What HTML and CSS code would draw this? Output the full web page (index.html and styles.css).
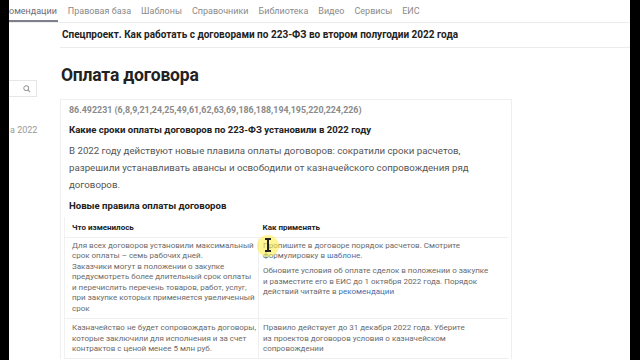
FILE: index.html
```html
<!DOCTYPE html>
<html lang="ru">
<head>
    <meta charset="UTF-8">
    <meta name="viewport" content="width=device-width, initial-scale=1.0">
    <title>Оплата договора</title>
    <link rel="stylesheet" href="styles.css">
</head>
<body>
    <div class="screen">
        <div class="nav">
            <a class="nav-item active">омендации</a>
            <a class="nav-item">Правовая база</a>
            <a class="nav-item">Шаблоны</a>
            <a class="nav-item">Справочники</a>
            <a class="nav-item">Библиотека</a>
            <a class="nav-item">Видео</a>
            <a class="nav-item">Сервисы</a>
            <a class="nav-item">ЕИС</a>
        </div>

        <div class="page">
            <!-- Левая колонка -->
            <div class="sidebar">
                <div class="search">
                    <svg width="8" height="8" viewBox="0 0 10 10">
                        <circle cx="4" cy="4" r="3" fill="none" stroke="#999" stroke-width="1.3"/>
                        <line x1="6.2" y1="6.2" x2="9" y2="9" stroke="#999" stroke-width="1.4"/>
                    </svg>
                </div>
                <div class="side-link">а 2022</div>
            </div>

            <div class="main">
                <div class="project">Спецпроект. Как работать с договорами по 223-ФЗ во втором полугодии 2022 года</div>
                <h1>Оплата договора</h1>

                <div class="card">
                    <div class="code">86.492231 (6,8,9,21,24,25,49,61,62,63,69,186,188,194,195,220,224,226)</div>
                    <h3>Какие сроки оплаты договоров по 223-ФЗ установили в 2022 году</h3>
                    <p class="lead">В 2022 году действуют новые плавила оплаты договоров: сократили сроки расчетов,<br>разрешили устанавливать авансы и освободили от казначейского сопровождения ряд<br>договоров.</p>
                    <h3 class="sub">Новые правила оплаты договоров</h3>

                    <table class="rules">
                        <colgroup>
                            <col class="col-what">
                            <col>
                        </colgroup>
                        <tr>
                            <th>Что изменилось</th>
                            <th>Как применять</th>
                        </tr>
                        <tr>
                            <td>
                                Для всех договоров установили максимальный<br>срок оплаты – семь рабочих дней.<br>
                                Заказчики могут в положении о закупке<br>предусмотреть более длительный срок оплаты<br>и перечислить перечень товаров, работ, услуг,<br>при закупке которых применяется увеличенный<br>срок
                            </td>
                            <td>
                                <p class="cell-p cursor-wrap">Пропишите в договоре порядок расчетов. Смотрите<br>формулировку в <a href="#">шаблоне</a>.<span class="cursor"><span class="beam"></span></span></p>
                                <p class="cell-p">Обновите условия об оплате сделок в положении о закупке<br>и разместите его в ЕИС до 1 октября 2022 года. Порядок<br>действий читайте в <a href="#">рекомендации</a></p>
                            </td>
                        </tr>
                        <tr>
                            <td>Казначейство не будет сопровождать договоры,<br>которые заключили для исполнения и за счет<br>контрактов с ценой менее 5 млн руб.</td>
                            <td>Правило действует до 31 декабря 2022 года. Уберите<br>из проектов договоров условия о казначейском<br>сопровождении</td>
                        </tr>
                    </table>
                </div>
                <div class="scrollbar"></div>
            </div>
        </div>
    </div>
</body>
</html>
```

FILE: styles.css
```css
body {
    margin: 0;
    padding: 0;
    background: #000;
    font-family: Roboto, Arial, sans-serif;
    color: #222;
}

.screen {
    width: 621px;
    height: 360px;
    margin-left: 9px;
    background: #fff;
    overflow: hidden;
}

/* Навигация */
.nav {
    display: flex;
    gap: 10px;
    height: 23px;
    border-bottom: 1px solid #ececec;
    box-sizing: border-box;
}

.nav-item {
    font-size: 9px;
    color: #8a8a8a;
    line-height: 23px;
    white-space: nowrap;
}

.nav-item.active {
    color: #6b6b78;
    box-shadow: inset 0 -2px 0 #7d7f8c;
    padding-right: 1px;
}

.page {
    display: flex;
}

.sidebar {
    width: 51px;
    flex-shrink: 0;
}

.search {
    margin-top: 57px;
    width: 28px;
    height: 17px;
    border: 1px solid #e6e6e6;
    border-left: none;
    box-sizing: border-box;
    display: flex;
    align-items: center;
    justify-content: flex-end;
    padding-right: 5px;
}

.side-link {
    margin-top: 28px;
    font-size: 9px;
    color: #999;
    padding-left: 1px;
}

.main {
    flex: 1;
}

.project {
    height: 25px;
    line-height: 24px;
    padding-left: 2px;
    font-size: 10px;
    font-weight: 700;
    color: #222;
    border-bottom: 1px solid #ececec;
    box-sizing: border-box;
    white-space: nowrap;
}

h1 {
    font-size: 17.5px;
    font-weight: 700;
    margin: 13px 0 0 1px;
    line-height: 28px;
    color: #222;
    letter-spacing: -0.2px;
}

.card {
    width: 452px;
    margin-top: 10px;
    border: 1px solid #efefef;
    border-bottom: none;
    box-sizing: border-box;
    padding: 4px 3px 0 3px;
}

.code,
.card h3,
.lead {
    padding-left: 5px;
}

.code {
    font-size: 8.9px;
    font-weight: 700;
    color: #8a8a8a;
    line-height: 12px;
}

h3 {
    font-size: 9.6px;
    font-weight: 700;
    margin: 7px 0 0;
    line-height: 14px;
    color: #222;
}

.lead {
    font-size: 9.7px;
    line-height: 17px;
    color: #555;
    margin: 5px 0 0;
    white-space: nowrap;
}

h3.sub {
    margin-top: 6px;
}

.rules {
    width: 100%;
    margin-top: 4px;
    border-collapse: collapse;
    table-layout: fixed;
    border-left: 1px solid #f1f1f1;
    font-size: 8px;
    line-height: 10.5px;
    color: #6a6a6a;
}

.col-what {
    width: 194px;
}

.rules th {
    text-align: left;
    font-weight: 700;
    color: #222;
    padding: 6px 4px 3px 4px;
    border-bottom: 1px solid #efefef;
}

.rules td {
    vertical-align: top;
    padding: 3px 4px 4px 4px;
    border-bottom: 1px solid #efefef;
    white-space: nowrap;
}

.rules th:first-child,
.rules td:first-child {
    padding-left: 7px;
}

.rules td:first-child {
    border-right: 1px solid #efefef;
}

.rules tr:last-child td {
    padding-top: 4px;
    padding-bottom: 3px;
}

.rules a {
    color: #3f6fae;
    text-decoration: none;
}

.cell-p {
    margin: 0 0 4.5px;
}

.cursor-wrap {
    position: relative;
}

/* Подсветка курсора */
.cursor {
    position: absolute;
    left: -6px;
    top: -6px;
    width: 22px;
    height: 22px;
    border-radius: 50%;
    background: rgba(255, 236, 60, 0.55);
}

.beam {
    position: absolute;
    left: 10px;
    top: 3px;
    width: 2px;
    height: 14px;
    background: #222;
}

.beam::before,
.beam::after {
    content: "";
    position: absolute;
    left: -2px;
    width: 6px;
    height: 2px;
    background: #222;
}

.beam::before {
    top: 0;
}

.beam::after {
    bottom: 0;
}

.scrollbar {
    width: 459px;
    height: 4px;
    margin: 1px 0 0 -9px;
    background: #d3d6db;
    border-radius: 2px;
}
```
